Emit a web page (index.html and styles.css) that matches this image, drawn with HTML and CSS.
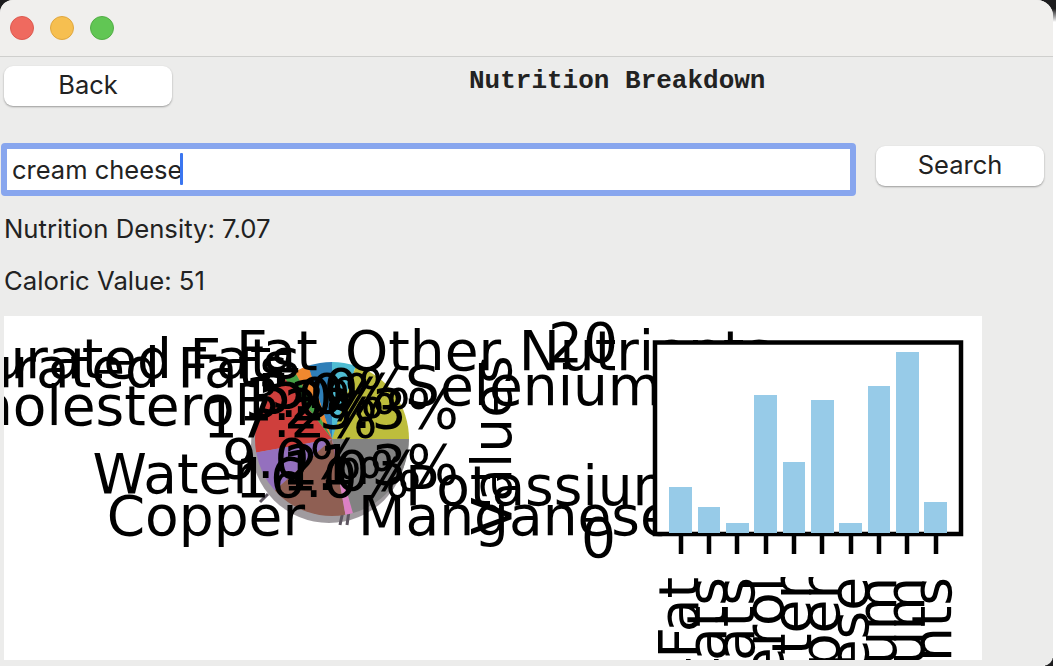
FILE: index.html
```html
<!DOCTYPE html>
<html lang="en">
<head>
    <meta charset="UTF-8">
    <meta name="viewport" content="width=device-width, initial-scale=1.0">
    <title>Nutrition Breakdown</title>
    <link rel="stylesheet" href="styles.css">
</head>
<body>
    <div class="window">
        <!-- Title bar -->
        <div class="titlebar">
            <span class="light red"></span>
            <span class="light yellow"></span>
            <span class="light green"></span>
        </div>

        <div class="top-row">
            <button class="btn back-btn">Back</button>
            <h1 class="page-title">Nutrition Breakdown</h1>
        </div>

        <div class="search-row">
            <div class="search-box">cream cheese<span class="caret"></span></div>
            <button class="btn search-btn">Search</button>
        </div>

        <p class="info density">Nutrition Density: 7.07</p>
        <p class="info caloric">Caloric Value: 51</p>

        <!-- Chart, coordinates are window pixels -->
        <svg class="chart" viewBox="4 316 978 344" width="978" height="344">
            <rect x="4" y="316" width="978" height="344" fill="#fff"/>

            <circle class="shadow" cx="329" cy="445" r="78"/>
            <path class="rim" d="M268 494l-8 8M343 511l-3 14M349 511l-2 14"/>
            <g transform="translate(332 439)">
                <path fill="#2f7fb8" d="M0 0L0 -77A77 77 0 0 0 -23.8 -73.2Z"/>
                <path fill="#f0882f" d="M0 0L-23.8 -73.2A77 77 0 0 0 -37.3 -67.3Z"/>
                <path fill="#45a045" d="M0 0L-37.3 -67.3A77 77 0 0 0 -47.4 -60.7Z"/>
                <path fill="#cf3f3c" d="M0 0L-47.4 -60.7A77 77 0 0 0 -75.8 13.4Z"/>
                <path fill="#9470be" d="M0 0L-75.8 13.4A77 77 0 0 0 -57.2 51.5Z"/>
                <path fill="#8f5f53" d="M0 0L-57.2 51.5A77 77 0 0 0 13.4 75.8Z"/>
                <path fill="#dc80c4" d="M0 0L13.4 75.8A77 77 0 0 0 21 74.1Z"/>
                <path fill="#828282" d="M0 0L21 74.1A77 77 0 0 0 77 0Z"/>
                <path fill="#bdbd3c" d="M0 0L77 0A77 77 0 0 0 23.8 -73.2Z"/>
                <path fill="#4fbcd2" d="M0 0L23.8 -73.2A77 77 0 0 0 0 -77Z"/>
            </g>

            <g class="plot-text">
                <text x="236" y="370">Fat</text>
                <text class="end" x="300" y="378">Saturated Fats</text>
                <text class="end" x="288" y="387">Polyunsaturated Fats</text>
                <text class="end" x="250" y="425">Cholesterol</text>
                <text class="end" x="255" y="493">Water</text>
                <text class="end" x="305" y="535">Copper</text>
                <text x="358" y="535">Manganese</text>
                <text x="405" y="505">Potassium</text>
                <text x="405" y="405">Selenium</text>
                <text x="345" y="370">Other Nutrients</text>

                <text x="257" y="413">5.0%</text>
                <text x="245" y="417">3.0%</text>
                <text x="238" y="420">1.2%</text>
                <text x="203" y="437">17.2%</text>
                <text x="222" y="478">9.0%</text>
                <text x="235" y="497">16.0%</text>
                <text x="282" y="490">1.0%</text>
                <text x="284" y="484">21.3%</text>
                <text x="284" y="428">23.3%</text>
                <text x="271" y="408">5.0%</text>

                <text x="548" y="362">20</text>
                <text x="581" y="557">0</text>
                <text transform="translate(511 535) rotate(-90)">Values</text>
            </g>

            <!-- Bar chart -->
            <rect class="axes" x="655" y="342.5" width="306" height="191.5"/>
            <g class="bars">
                <rect x="669" y="487" width="23" height="46"/>
                <rect x="698" y="507" width="22" height="26"/>
                <rect x="726" y="523" width="23" height="10"/>
                <rect x="754" y="395" width="23" height="138"/>
                <rect x="783" y="462" width="22" height="71"/>
                <rect x="811" y="400" width="23" height="133"/>
                <rect x="839" y="523" width="23" height="10"/>
                <rect x="868" y="386" width="22" height="147"/>
                <rect x="896" y="352" width="23" height="181"/>
                <rect x="924" y="502" width="23" height="31"/>
            </g>
            <path class="ticks" d="M681 536V554M709 536V554M737 536V554M766 536V554M794 536V554M822 536V554M851 536V554M879 536V554M907 536V554M936 536V554"/>
            <g class="plot-text">
                <text class="end" transform="translate(698 577) rotate(-90)">Fat</text>
                <text class="end" transform="translate(726 577) rotate(-90)">Saturated Fats</text>
                <text class="end" transform="translate(754 577) rotate(-90)">Polyunsaturated Fats</text>
                <text class="end" transform="translate(783 577) rotate(-90)">Cholesterol</text>
                <text class="end" transform="translate(811 577) rotate(-90)">Water</text>
                <text class="end" transform="translate(839 577) rotate(-90)">Copper</text>
                <text class="end" transform="translate(868 577) rotate(-90)">Manganese</text>
                <text class="end" transform="translate(896 577) rotate(-90)">Potassium</text>
                <text class="end" transform="translate(924 577) rotate(-90)">Selenium</text>
                <text class="end" transform="translate(951 577) rotate(-90)">Other Nutrients</text>
            </g>
        </svg>
    </div>
</body>
</html>
```

FILE: styles.css
```css
* {
    box-sizing: border-box;
}

html, body {
    margin: 0;
    height: 100%;
    overflow: hidden;
    background-color: #fff;
}

body {
    font-family: Inter, "Noto Sans", sans-serif;
    color: #222;
}

/* dark desktop showing behind the rounded corners */
body::before {
    content: "";
    position: absolute;
    top: 0;
    left: 0;
    width: 1056px;
    height: 22px;
    background: linear-gradient(to bottom, #1c1c1e 0, #1c1c1e 40%, #fff 100%);
}

body::after {
    content: "";
    position: absolute;
    right: 3px;
    bottom: 0;
    width: 8px;
    height: 8px;
    background-color: #1c1c1e;
}

.window {
    position: relative;
    z-index: 1;
    width: 1053px;
    height: 666px;
    background-color: #ececeb;
    border-radius: 13px 16px 10px 0;
}

.titlebar {
    height: 57px;
    padding: 16px 0 0 10px;
    display: flex;
    gap: 16px;
    background-color: #f0efed;
    border-bottom: 1px solid #cfcfcd;
    border-radius: 13px 16px 0 0;
}

.light {
    width: 24px;
    height: 24px;
    border-radius: 50%;
}

.red {
    background-color: #ef6a5f;
    border: 1px solid #dd5a50;
}

.yellow {
    background-color: #f6bf50;
    border: 1px solid #e0a73f;
}

.green {
    background-color: #61c654;
    border: 1px solid #52ae46;
}

.btn {
    height: 40px;
    background-color: #fff;
    border: none;
    border-radius: 9px;
    box-shadow: 0 1px 2px rgba(0, 0, 0, 0.35);
    font-family: inherit;
    font-size: 25.5px;
    line-height: 36px;
    color: #222;
    padding: 0 0 3px;
}

.top-row {
    display: flex;
    padding: 9px 0 0 4px;
    height: 86px;
}

.back-btn {
    width: 168px;
}

.page-title {
    margin: 0;
    padding: 0 0 0 297px;
    font-family: "Liberation Mono", monospace;
    font-size: 26px;
    line-height: 30px;
    font-weight: bold;
}

.search-row {
    display: flex;
    align-items: center;
    padding-left: 1px;
    gap: 20px;
}

.search-box {
    width: 855px;
    height: 53px;
    border: 6px solid #88a6ee;
    border-radius: 4px;
    background-color: #fff;
    font-size: 25.5px;
    line-height: 39px;
    padding: 0 0 1px 5px;
    display: flex;
    align-items: center;
}

.caret {
    width: 3px;
    height: 32px;
    margin-left: -2px;
    background-color: #3b76f0;
    border-radius: 1px;
}

.search-btn {
    width: 168px;
    margin-top: -7px;
}

.info {
    margin: 0;
    padding-left: 4px;
    font-size: 25.7px;
    line-height: 30px;
}

.density {
    padding-top: 18px;
}

.caloric {
    padding-top: 22px;
}

.chart {
    display: block;
    margin: 20px 0 0 4px;
}

.shadow {
    fill: #8f8a8e;
    fill-opacity: 0.85;
}

.rim {
    stroke: #5d5560;
    stroke-width: 3;
    fill: none;
}

.plot-text text {
    font-family: "DejaVu Sans", sans-serif;
    font-size: 55px;
    fill: #000;
}

.plot-text .end {
    text-anchor: end;
}

.axes {
    fill: #fff;
    stroke: #000;
    stroke-width: 4.5;
}

.bars rect {
    fill: #97cbe8;
}

.ticks {
    stroke: #000;
    stroke-width: 4.5;
    fill: none;
}
```
